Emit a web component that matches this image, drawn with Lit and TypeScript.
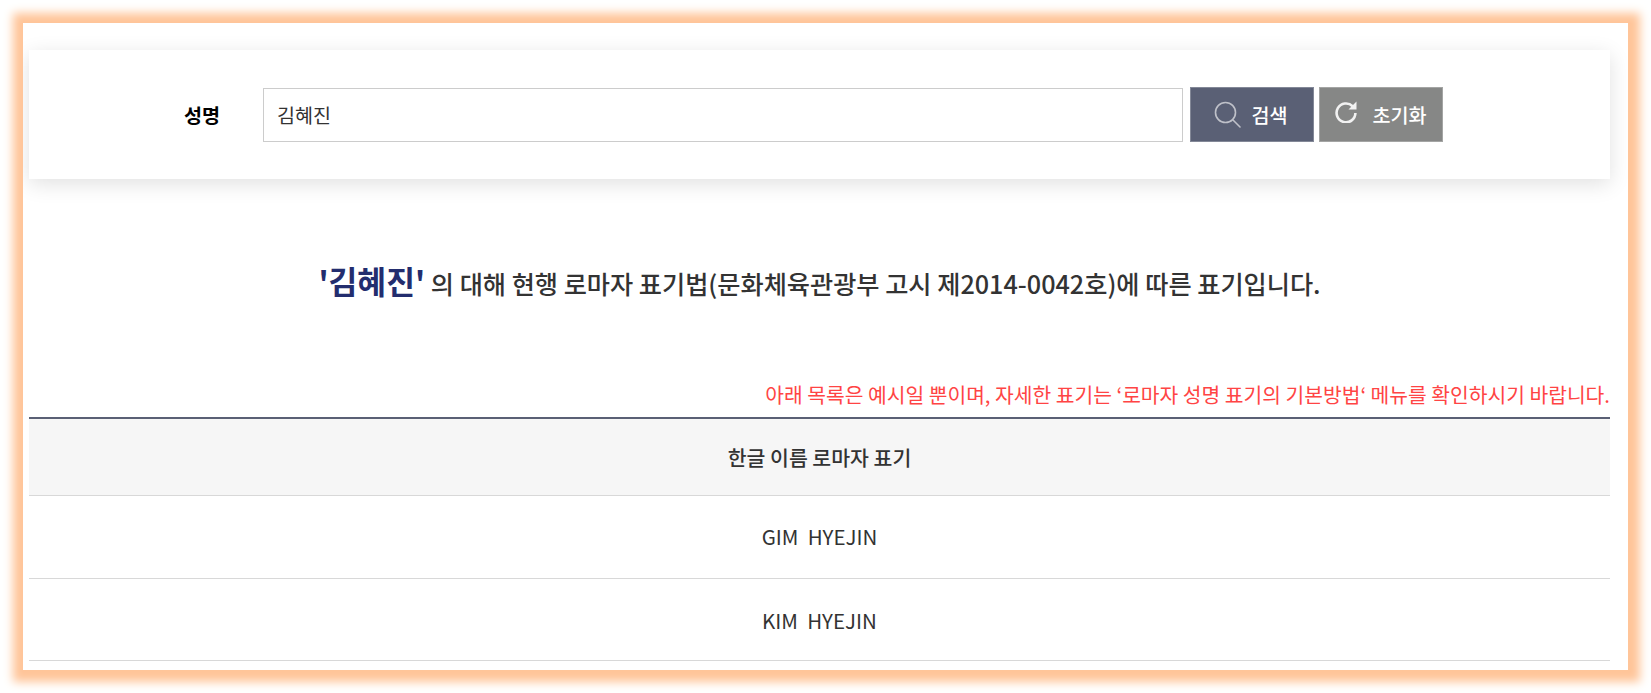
import { LitElement, html, css } from "lit";
import { customElement } from "lit/decorators.js";

@customElement("app-root")
export class AppRoot extends LitElement {
  static styles = css`
    :host {
      display: block;
      height: 693px;
      box-sizing: border-box;
      padding: 23px 23px 23px 23px;
      background: #fff;
      font-family: "Noto Sans CJK KR", "Noto Sans", sans-serif;
      color: #333;
    }
    .frame {
      box-sizing: border-box;
      height: 647px;
      box-shadow: 1px 1px 9px 11px #ffc599;
      background: #fff;
      padding: 27px 18px 0 6px;
      overflow: hidden;
    }
    .card {
      height: 129px;
      display: flex;
      align-items: center;
      background: #fff;
      box-shadow: 0 5px 20px rgba(0, 0, 0, 0.12);
      padding-left: 155px;
      box-sizing: border-box;
    }
    .label {
      width: 79px;
      font-size: 19.6px;
      font-weight: 700;
      color: #000;
      line-height: 26px;
    }
    .input {
      box-sizing: border-box;
      width: 920px;
      height: 54px;
      border: 1px solid #ccc;
      padding-left: 13px;
      display: flex;
      align-items: center;
      font-size: 19.6px;
      color: #333;
    }
    .btn {
      box-sizing: border-box;
      width: 124px;
      height: 55px;
      display: flex;
      align-items: center;
      justify-content: center;
      color: #fff;
      font-size: 19.6px;
      font-weight: 500;
      border: 1px solid rgba(255, 255, 255, 0.25);
    }
    .btn.search { background: #5a6075; margin-left: 7px; gap: 10px; padding-right: 2px; }
    .btn.reset { background: #868786; margin-left: 5px; gap: 15px; }
    .btn svg { display: block; flex: none; }
    .btn.reset svg { margin-bottom: 5px; }
    .title {
      height: 122px;
      margin-top: 80px;
      text-align: center;
      font-size: 25.2px;
      font-weight: 500;
      line-height: 44px;
      color: #333;
    }
    .title b {
      font-size: 31.3px;
      font-weight: 700;
      color: #232d6e;
    }
    .note {
      text-align: right;
      color: #ff4444;
      font-size: 20.35px;
      line-height: 28px;
      height: 37px;
      margin-top: -1px;
      white-space: nowrap;
    }
    .table { border-top: 2px solid #5a6075; }
    .th {
      height: 76px;
      background: #f6f6f6;
      border-bottom: 1px solid #d8d8d8;
      display: flex;
      align-items: center;
      justify-content: center;
      font-size: 20.5px;
      font-weight: 500;
      color: #333;
    }
    .td {
      height: 82px;
      padding-bottom: 0;
      border-bottom: 1px solid #d8d8d8;
      display: flex;
      align-items: center;
      justify-content: center;
      font-size: 20.5px;
      color: #333;
      white-space: pre;
    }
    .td:first-of-type { box-sizing: border-box; }
    .td.last { height: 81px; }
    .td.first { padding-bottom: 2px; height: 80px; }
  `;

  render() {
    return html`
      <div class="frame">
        <div class="card">
          <div class="label">성명</div>
          <div class="input">김혜진</div>
          <div class="btn search">
            <svg width="27" height="27" viewBox="0 0 27 27" fill="none" stroke="#bfc1c9" stroke-width="1.6">
              <circle cx="11.5" cy="11.5" r="10"></circle>
              <path d="M19 19 L26 26" stroke-linecap="round"></path>
            </svg>
            <span>검색</span>
          </div>
          <div class="btn reset">
            <svg width="22" height="22" viewBox="0 0 22 22" fill="none" stroke="#f2f2f2" stroke-width="2.6">
              <path d="M17.6 5.2 A9.4 9.4 0 1 0 20.4 12"></path>
              <path d="M21.5 0.5 L21.5 8.5 L13.5 8.5 Z" fill="#f2f2f2" stroke="none"></path>
            </svg>
            <span>초기화</span>
          </div>
        </div>
        <div class="title"><b>'김혜진'</b> 의 대해 현행 로마자 표기법(문화체육관광부 고시 제2014-0042호)에 따른 표기입니다.</div>
        <div class="note">아래 목록은 예시일 뿐이며, 자세한 표기는 ‘로마자 성명 표기의 기본방법‘ 메뉴를 확인하시기 바랍니다.</div>
        <div class="table">
          <div class="th">한글 이름 로마자 표기</div>
          <div class="td first">GIM  HYEJIN</div>
          <div class="td last">KIM  HYEJIN</div>
        </div>
      </div>
    `;
  }
}
